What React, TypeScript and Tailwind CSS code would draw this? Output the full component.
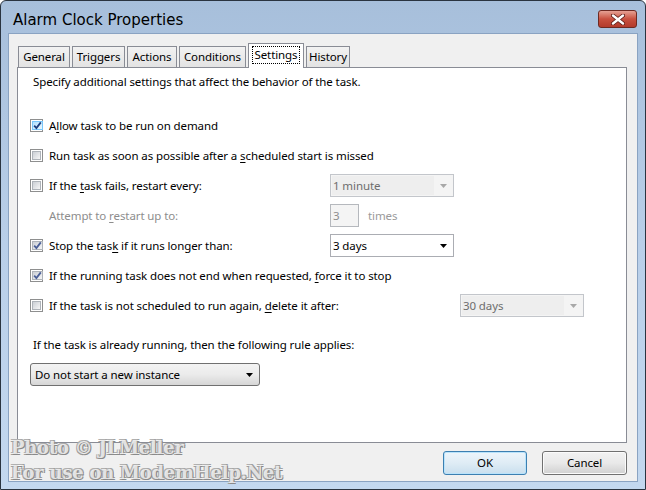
import React from 'react'

const font = { fontFamily: '"Noto Sans", "Open Sans", sans-serif' }

function Arrow({ color }: { color: string }) {
  return (
    <svg width="7" height="4" viewBox="0 0 7 4">
      <polygon points="0,0 7,0 3.5,4" fill={color} />
    </svg>
  )
}

function Check({ checked, hot }: { checked?: boolean; hot?: boolean }) {
  return (
    <span className="w-[13px] h-[13px] shrink-0 border border-[#8e8f8f] bg-white p-[1px] flex">
      <span
        className={
          hot
            ? 'flex-1 flex items-center justify-center border border-[#79c6f9] bg-gradient-to-br from-[#b1dffd] to-[#e9f7fe]'
            : 'flex-1 flex items-center justify-center border border-[#aeb3b9] bg-gradient-to-br from-[#cbcfd5] to-[#f6f6f6]'
        }
      >
        {checked && (
          <svg width="9" height="9" viewBox="0 0 9 9">
            <path
              d="M1.2 4.6 L3.4 7 L7.8 1.4"
              fill="none"
              stroke={hot ? '#1c3c7c' : '#4a5f97'}
              strokeWidth="1.8"
            />
          </svg>
        )}
      </span>
    </span>
  )
}

function U({ children }: { children: React.ReactNode }) {
  return <span className="underline underline-offset-2 decoration-1">{children}</span>
}

function Row({
  checked,
  hot,
  children,
  labelWidth = 'w-[300px]',
  control,
}: {
  checked?: boolean
  hot?: boolean
  children: React.ReactNode
  labelWidth?: string
  control?: React.ReactNode
}) {
  return (
    <div className="h-[23px] flex items-center">
      <div className={`${control ? labelWidth : ''} flex items-center gap-[6px] shrink-0 whitespace-nowrap`}>
        <Check checked={checked} hot={hot} />
        <span>{children}</span>
      </div>
      {control}
    </div>
  )
}

function Combo({ value, disabled }: { value: string; disabled?: boolean }) {
  if (disabled) {
    return (
      <div className="w-[124px] h-[23px] border border-[#c3c6cb] bg-[#f4f4f4] flex items-center p-[1px]">
        <div className="w-[102px] h-full bg-[#eeeeee] flex items-center pl-[1px] text-[#6d6d6d]">{value}</div>
        <div className="flex-1 flex justify-center">
          <Arrow color="#a8a8a8" />
        </div>
      </div>
    )
  }
  return (
    <div className="w-[124px] h-[23px] border border-[#abadb3] bg-white flex items-center pl-[2px]">
      <div className="flex-1">{value}</div>
      <div className="w-[20px] flex justify-center">
        <Arrow color="#000" />
      </div>
    </div>
  )
}

const tabs = [
  { name: 'General', w: 'w-[52px]' },
  { name: 'Triggers', w: 'w-[53px]' },
  { name: 'Actions', w: 'w-[50px]' },
  { name: 'Conditions', w: 'w-[67px]' },
  { name: 'Settings', w: 'w-[56px]', active: true },
  { name: 'History', w: 'w-[44px]' },
]

export default function App() {
  return (
    <div
      className="w-[646px] h-[490px] flex flex-col bg-gradient-to-b from-[#a7bfdb] via-[#b9cfe9] to-[#c3d8ef] border border-[#2a3440] rounded-t-[6px] relative overflow-hidden text-[11.5px] tracking-[-0.1px] text-black"
      style={font}
    >
      {/* Title bar */}
      <div className="h-[32px] flex items-start justify-between pl-[12px] pr-[8px] shrink-0">
        <div
          className="pt-[9px] text-[15px] leading-[20px] tracking-normal text-black"
          style={{ fontFamily: '"DejaVu Sans", sans-serif' }}
        >
          Alarm Clock Properties
        </div>
        <div className="mt-[9px] w-[39px] h-[18px] rounded-[3px] border border-[#6e2a22] bg-gradient-to-b from-[#e5a194] via-[#c8503f] to-[#b33b2c] flex items-center justify-center">
          <svg width="14" height="11" viewBox="0 0 14 11">
            <path d="M2 1.5 L12 9.5 M12 1.5 L2 9.5" stroke="#5a1a14" strokeWidth="4" strokeLinecap="round" />
            <path d="M2 1.5 L12 9.5 M12 1.5 L2 9.5" stroke="#ffffff" strokeWidth="2.4" strokeLinecap="round" />
          </svg>
        </div>
      </div>

      {/* Client area */}
      <div className="flex-1 mx-[7px] mb-[7px] border border-[#8aa3c2] bg-[#f0f0f0] flex flex-col">
        {/* Tabs */}
        <div className="h-[33px] flex items-end gap-[2px] pl-[9px] shrink-0">
          {tabs.map((t) =>
            t.active ? (
              <div
                key={t.name}
                className={`${t.w} h-[25px] -mb-[1px] border border-b-0 border-[#898c95] bg-white flex items-start justify-center pt-[2px] relative z-10`}
              >
                <span className="border border-dotted border-black px-[2px] leading-[16px]">{t.name}</span>
              </div>
            ) : (
              <div
                key={t.name}
                className={`${t.w} h-[21px] border border-b-0 border-[#898c95] bg-gradient-to-b from-[#f2f2f2] to-[#e3e3e3] flex items-center justify-center`}
              >
                {t.name}
              </div>
            )
          )}
        </div>

        {/* Tab panel */}
        <div className="h-[376px] ml-[8px] mr-[10px] border border-[#898c95] bg-white pl-[12px] pt-[6px] shrink-0">
          <div className="pl-[3px] leading-[16px]">Specify additional settings that affect the behavior of the task.</div>

          <div className="mt-[24px] flex flex-col gap-[7px]">
            <Row checked hot>
              A<U>l</U>low task to be run on demand
            </Row>
            <Row>
              Run task as soon as possible after a <U>s</U>cheduled start is missed
            </Row>
            <Row control={<Combo value="1  minute" disabled />}>
              If the <U>t</U>ask fails, restart every:
            </Row>
            <div className="h-[23px] flex items-center">
              <div className="w-[300px] pl-[19px] text-[#8d8d8d] shrink-0">
                Attempt to <U>r</U>estart up to:
              </div>
              <div className="w-[29px] h-[23px] border border-[#b5b8bd] bg-[#f4f4f4] flex items-center pl-[2px] text-[#8d8d8d]">
                3
              </div>
              <span className="ml-[9px] text-[#9a9a9a]">times</span>
            </div>
            <Row checked control={<Combo value="3  days" />}>
              Stop the tas<U>k</U> if it runs longer than:
            </Row>
            <Row checked>
              If the running task does not end when requested, <U>f</U>orce it to stop
            </Row>
            <Row labelWidth="w-[430px]" control={<Combo value="30  days" disabled />}>
              If the task is not scheduled to run again, <U>d</U>elete it after:
            </Row>
          </div>

          <div className="mt-[20px] pl-[3px] leading-[16px]">
            If the task is already running, then the following rule applies:
          </div>
          <div className="mt-[10px] w-[230px] h-[23px] rounded-[3px] border border-[#707070] bg-gradient-to-b from-[#f3f3f3] via-[#ebebeb] to-[#d6d6d6] flex items-center pl-[4px] pr-[6px]">
            <span className="flex-1">Do not start a new instance</span>
            <Arrow color="#000" />
          </div>
        </div>

        {/* Buttons */}
        <div className="flex justify-end gap-[15px] mr-[10px] mt-[8px]">
          <button className="w-[84px] h-[24px] rounded-[3px] border border-[#3c7fb1] bg-gradient-to-b from-[#edf5fb] via-[#dfecf5] to-[#c9dfee] shadow-[inset_0_0_0_1px_#b9e3fb]">
            OK
          </button>
          <button className="w-[85px] h-[24px] rounded-[3px] border border-[#707070] bg-gradient-to-b from-[#f2f2f2] via-[#e9e9e9] to-[#d0d0d0] shadow-[inset_0_0_0_1px_#fbfbfb]">
            Cancel
          </button>
        </div>
      </div>

      {/* Watermark */}
      <div
        className="absolute left-[10px] top-[434px] text-[18px] leading-[25px] font-bold text-white/75 tracking-[-0.25px] pointer-events-none"
        style={{
          fontFamily: '"DejaVu Serif", serif',
          textShadow: '1px 1px 0 #8a8a8a, -1px -1px 0 #b0b0b0, 1px -1px 0 #a0a0a0, -1px 1px 0 #a0a0a0',
        }}
      >
        <div>Photo © JLMeller</div>
        <div>For use on ModemHelp.Net</div>
      </div>
    </div>
  )
}
